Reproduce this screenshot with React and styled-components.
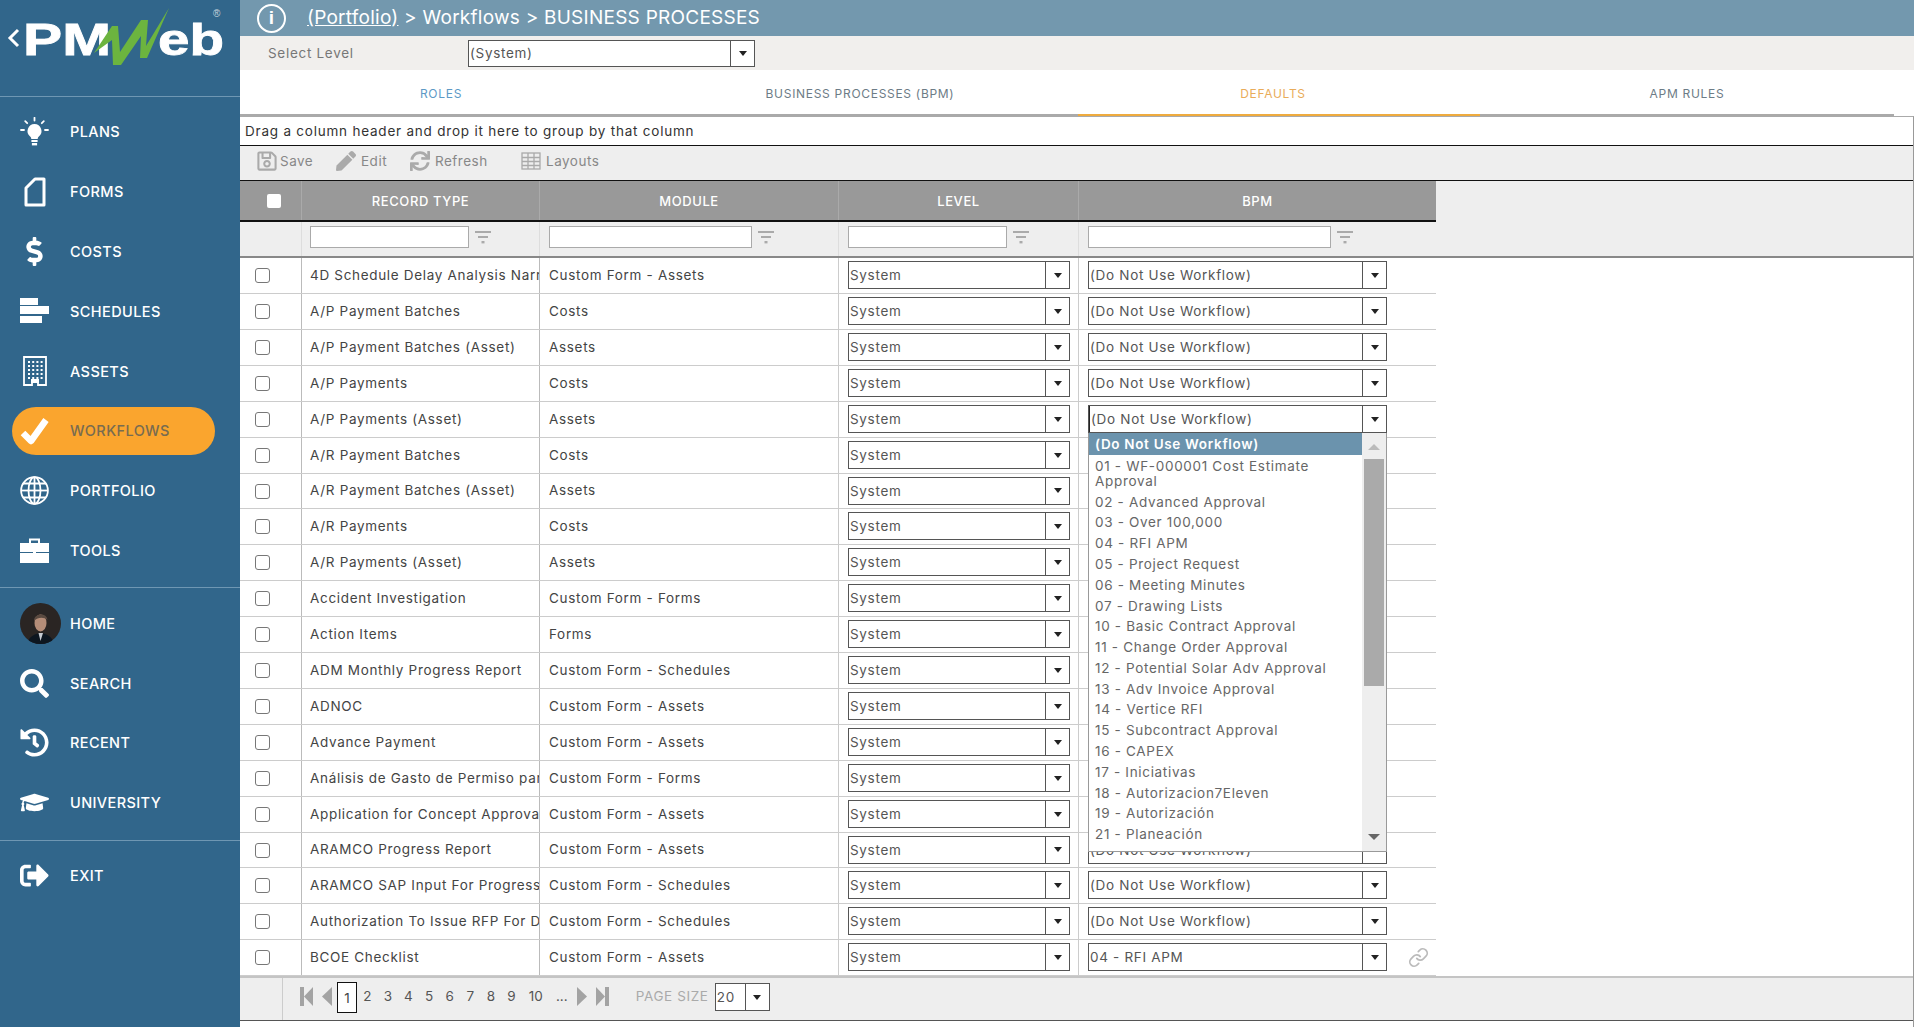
import React from "react";
import styled, { createGlobalStyle } from "styled-components";
import {
  FaDollarSign,
  FaSearch,
  FaHistory,
  FaGraduationCap,
  FaSignOutAlt,
  FaRegSave,
  FaPen,
  FaSync,
} from "react-icons/fa";
import { Link as LinkIcon } from "lucide-react";

const COLUMNS = "61px 238px 299px 240px 358px";

const GlobalStyle = createGlobalStyle`
  html, body {
    margin: 0;
    padding: 0;
    background: #fff;
    font-family: "Inter", "Liberation Sans", sans-serif;
  }
  * { box-sizing: border-box; }
`;

const rows = [
  { type: "4D Schedule Delay Analysis Narrative", module: "Custom Form - Assets" },
  { type: "A/P Payment Batches", module: "Costs" },
  { type: "A/P Payment Batches (Asset)", module: "Assets" },
  { type: "A/P Payments", module: "Costs" },
  { type: "A/P Payments (Asset)", module: "Assets", open: true },
  { type: "A/R Payment Batches", module: "Costs" },
  { type: "A/R Payment Batches (Asset)", module: "Assets", short: true },
  { type: "A/R Payments", module: "Costs" },
  { type: "A/R Payments (Asset)", module: "Assets" },
  { type: "Accident Investigation", module: "Custom Form - Forms" },
  { type: "Action Items", module: "Forms" },
  { type: "ADM Monthly Progress Report", module: "Custom Form - Schedules" },
  { type: "ADNOC", module: "Custom Form - Assets" },
  { type: "Advance Payment", module: "Custom Form - Assets" },
  { type: "Análisis de Gasto de Permiso para Obra", module: "Custom Form - Forms" },
  { type: "Application for Concept Approval", module: "Custom Form - Assets" },
  { type: "ARAMCO Progress Report", module: "Custom Form - Assets", short: true },
  { type: "ARAMCO SAP Input For Progress Report", module: "Custom Form - Schedules" },
  { type: "Authorization To Issue RFP For Design", module: "Custom Form - Schedules" },
  { type: "BCOE Checklist", module: "Custom Form - Assets", bpm: "04 - RFI APM", linked: true },
];

const workflowOptions = [
  "01 - WF-000001 Cost Estimate Approval",
  "02 - Advanced Approval",
  "03 - Over 100,000",
  "04 - RFI APM",
  "05 - Project Request",
  "06 - Meeting Minutes",
  "07 - Drawing Lists",
  "10 - Basic Contract Approval",
  "11 - Change Order Approval",
  "12 - Potential Solar Adv Approval",
  "13 - Adv Invoice Approval",
  "14 - Vertice RFI",
  "15 - Subcontract Approval",
  "16 - CAPEX",
  "17 - Iniciativas",
  "18 - Autorizacion7Eleven",
  "19 - Autorización",
  "21 - Planeación",
];

const PlansIcon = () => (
  <svg width="29" height="30" viewBox="0 0 29 30" fill="#fff">
    <path d="M14.5 7a7 7 0 0 0-4.4 12.4c.9.8 1.2 1.7 1.2 2.6h6.4c0-.9.3-1.8 1.2-2.6A7 7 0 0 0 14.5 7z" />
    <rect x="11.4" y="23" width="6.2" height="2" />
    <rect x="11.9" y="26" width="5.2" height="2.4" />
    <g stroke="#fff" strokeWidth="1.8" strokeLinecap="round">
      <line x1="14.5" y1="0.8" x2="14.5" y2="3.6" />
      <line x1="5.2" y1="4.2" x2="7.2" y2="6.2" />
      <line x1="23.8" y1="4.2" x2="21.8" y2="6.2" />
      <line x1="1" y1="13" x2="4" y2="13" />
      <line x1="25" y1="13" x2="28" y2="13" />
    </g>
  </svg>
);

const FormsIcon = () => (
  <svg width="29" height="30" viewBox="-4 0 29 30" fill="none" stroke="#fff" strokeWidth="3">
    <path d="M2 11 L11 2 H20 V28 H2 Z" strokeLinejoin="round" />
  </svg>
);

const SchedulesIcon = () => (
  <svg width="29" height="26" viewBox="0 0 29 26" fill="#fff">
    <rect x="0" y="0" width="18" height="7" />
    <rect x="0" y="8" width="29" height="8" />
    <rect x="0" y="18" width="22" height="7" />
  </svg>
);

const AssetsIcon = () => (
  <svg width="29" height="30" viewBox="-3 0 29 30">
    <path d="M1 1 H23 V29 H15 V25 H9 V29 H1 Z" fill="none" stroke="#fff" strokeWidth="1.8" />
    {[5, 9, 13, 17, 21].map((y) =>
      [5, 9.2, 13.4, 17.6].map((x) => <rect key={`${x}-${y}`} x={x} y={y} width="2" height="2" fill="#fff" />)
    )}
    <rect x="8" y="23" width="8" height="4" fill="#fff" />
  </svg>
);

const CheckIcon = () => (
  <svg width="29" height="28" viewBox="0 0 29 28">
    <path d="M3 16 L11 24 L26 3" fill="none" stroke="#fff" strokeWidth="6.5" strokeLinejoin="round" />
  </svg>
);

const GlobeIcon = () => (
  <svg width="29" height="29" viewBox="0 0 29 29" fill="none" stroke="#fff" strokeWidth="1.8">
    <circle cx="14.5" cy="14.5" r="13.4" />
    <ellipse cx="14.5" cy="14.5" rx="6" ry="13.4" />
    <line x1="14.5" y1="1" x2="14.5" y2="28" />
    <line x1="1" y1="14.5" x2="28" y2="14.5" />
    <path d="M3 7.5 H26 M3 21.5 H26" />
  </svg>
);

const ToolsIcon = () => (
  <svg width="29" height="26" viewBox="0 0 29 26" fill="#fff">
    <path d="M10 6 V2.5 H19 V6" fill="none" stroke="#fff" strokeWidth="2" />
    <rect x="0" y="6" width="29" height="9" />
    <rect x="0" y="16" width="29" height="10" />
    <rect x="13" y="14" width="3" height="3" />
  </svg>
);

const FilterIcon = () => (
  <svg width="16" height="13" viewBox="0 0 16 13" fill="#aaa">
    <rect x="0" y="0" width="16" height="2" />
    <rect x="3" y="5" width="10" height="2" />
    <rect x="6.5" y="10" width="3" height="2.4" />
  </svg>
);

const GridIcon = () => (
  <svg width="20" height="18" viewBox="0 0 20 18" fill="none" stroke="#aaa" strokeWidth="1.3">
    <rect x="1" y="1" width="18" height="16" />
    <path d="M1 5.5 H19 M1 9.5 H19 M1 13.5 H19 M7 1 V17 M13 1 V17" />
  </svg>
);

const Avatar = () => (
  <svg width="41" height="41" viewBox="0 0 41 41">
    <defs>
      <clipPath id="avatar-clip">
        <circle cx="20.5" cy="20.5" r="20.5" />
      </clipPath>
    </defs>
    <g clipPath="url(#avatar-clip)">
      <rect width="41" height="41" fill="#2a2523" />
      <path d="M7 41 C9 33 15 31 20 30 C27 31 32 33 34 41 Z" fill="#0d1620" />
      <path d="M18.5 30 L20.5 38 L23 30 Z" fill="#c8ccd2" />
      <ellipse cx="20.5" cy="20" rx="6" ry="8.5" fill="#b58d78" />
      <path d="M14 18 C13.5 10 27 9 27.5 17 C24 14 18 14 14 18 Z" fill="#5a4a40" />
    </g>
  </svg>
);

const Logo = () => (
  <LogoBox>
    <svg width="240" height="72" viewBox="0 0 240 72">
      <path d="M18 30 L10 38 L18 46" fill="none" stroke="#fff" strokeWidth="3" />
      <text x="23" y="55" fill="#fff" stroke="#fff" strokeWidth="0.8" fontFamily="Liberation Sans" fontWeight="700" fontSize="45" textLength="88" lengthAdjust="spacingAndGlyphs">
        PM
      </text>
      <text x="158" y="55" fill="#fff" stroke="#fff" strokeWidth="0.8" fontFamily="Liberation Sans" fontWeight="700" fontSize="45" textLength="66" lengthAdjust="spacingAndGlyphs">
        eb
      </text>
      <path
        d="M94 53 L112 26 L118 26 L120 52 L141 20 L148 20 L146 46 L169 8 L147 58 L140 58 L141 36 L121 65 L113 65 L112 40 Z"
        fill="#6cb43f"
      />
      <text x="213" y="17" fill="#c9d6df" fontFamily="Liberation Sans" fontSize="10">®</text>
    </svg>
  </LogoBox>
);

const SelectField = ({ value, width, height, focused, children }) => (
  <SelectBox $width={width} $height={height}>
    <SelectValue $focused={focused}>{value}</SelectValue>
    <SelectButton><Caret /></SelectButton>
    {children}
  </SelectBox>
);

const WorkflowDropdown = () => (
  <Dropdown>
    <OptionList>
      <ActiveOption>(Do Not Use Workflow)</ActiveOption>
      {workflowOptions.map((o) => (
        <Option key={o}>{o}</Option>
      ))}
    </OptionList>
    <ScrollTrack>
      <ArrowUp />
      <ScrollThumb />
      <ArrowDown />
    </ScrollTrack>
  </Dropdown>
);

const App = () => {
  return (
    <Page>
      <GlobalStyle />
      <Sidebar>
        <Logo />
        <NavGroup>
          <NavItem><NavIcon><PlansIcon /></NavIcon>PLANS</NavItem>
          <NavItem><NavIcon><FormsIcon /></NavIcon>FORMS</NavItem>
          <NavItem><NavIcon><FaDollarSign size={29} /></NavIcon>COSTS</NavItem>
          <NavItem><NavIcon><SchedulesIcon /></NavIcon>SCHEDULES</NavItem>
          <NavItem><NavIcon><AssetsIcon /></NavIcon>ASSETS</NavItem>
          <ActiveNav><NavIcon><CheckIcon /></NavIcon>WORKFLOWS</ActiveNav>
          <NavItem><NavIcon><GlobeIcon /></NavIcon>PORTFOLIO</NavItem>
          <NavItem><NavIcon><ToolsIcon /></NavIcon>TOOLS</NavItem>
        </NavGroup>
        <NavGroup>
          <NavItem><NavIcon><Avatar /></NavIcon>HOME</NavItem>
          <NavItem><NavIcon><FaSearch size={29} /></NavIcon>SEARCH</NavItem>
          <NavItem><NavIcon><FaHistory size={29} /></NavIcon>RECENT</NavItem>
          <NavItem><NavIcon><FaGraduationCap size={29} /></NavIcon>UNIVERSITY</NavItem>
        </NavGroup>
        <NavGroup>
          <NavItem><NavIcon><FaSignOutAlt size={29} /></NavIcon>EXIT</NavItem>
        </NavGroup>
      </Sidebar>

      <Main>
        <TopBar>
          <InfoIcon>i</InfoIcon>
          <Crumbs><CrumbLink>(Portfolio)</CrumbLink> &gt; Workflows &gt; BUSINESS PROCESSES</Crumbs>
        </TopBar>

        <LevelBar>
          <LevelLabel>Select Level</LevelLabel>
          <SelectField value="(System)" width={287} height={27} />
        </LevelBar>

        <Tabs>
          <Tab $color="#5d9ac6">ROLES</Tab>
          <Tab>BUSINESS PROCESSES (BPM)</Tab>
          <Tab $color="#e9ac5a" $active>DEFAULTS</Tab>
          <Tab>APM RULES</Tab>
        </Tabs>

        <GridBox>
          <GroupBar>Drag a column header and drop it here to group by that column</GroupBar>
          <Toolbar>
            <ToolButton $width={80} $gap={2}><FaRegSave size={22} />Save</ToolButton>
            <ToolButton $width={74}><FaPen size={20} />Edit</ToolButton>
            <ToolButton $width={111}><FaSync size={20} />Refresh</ToolButton>
            <ToolButton><GridIcon />Layouts</ToolButton>
          </Toolbar>

          <HeaderBand>
            <HeaderRow>
              <HeaderCell $first><HeaderCheck /></HeaderCell>
              <HeaderCell>RECORD TYPE</HeaderCell>
              <HeaderCell>MODULE</HeaderCell>
              <HeaderCell>LEVEL</HeaderCell>
              <HeaderCell>BPM</HeaderCell>
            </HeaderRow>
          </HeaderBand>

          <FilterBand>
            <FilterRow>
              <FilterCell />
              <FilterCell $indent={8}><FilterInput $width={159} /><FilterIcon /></FilterCell>
              <FilterCell><FilterInput $width={203} /><FilterIcon /></FilterCell>
              <FilterCell><FilterInput $width={159} /><FilterIcon /></FilterCell>
              <FilterCell><FilterInput $width={243} /><FilterIcon /></FilterCell>
            </FilterRow>
          </FilterBand>

          <Body>
            {rows.map((row) => (
              <Row key={row.type} $short={row.short}>
                <CheckCell><RowCheck /></CheckCell>
                <TextCell $indent={8}>{row.type}</TextCell>
                <TextCell>{row.module}</TextCell>
                <ControlCell><SelectField value="System" width={222} height={28} /></ControlCell>
                <ControlCell>
                  <SelectField value={row.bpm || "(Do Not Use Workflow)"} width={299} height={28} focused={row.open}>
                    {row.open && <WorkflowDropdown />}
                  </SelectField>
                  {row.linked && <LinkMark><LinkIcon size={21} /></LinkMark>}
                </ControlCell>
              </Row>
            ))}
          </Body>

          <Pager>
            <PagerGutter />
            <PagerNav>
              <PagerIcon $gap={9}>
                <svg width="13" height="19" viewBox="0 0 13 19" fill="#a3a3a3"><rect width="4" height="19" /><path d="M13 0 V19 L4 9.5 Z" /></svg>
              </PagerIcon>
              <PagerIcon $gap={5}>
                <svg width="10" height="19" viewBox="0 0 10 19" fill="#a3a3a3"><path d="M10 0 V19 L0 9.5 Z" /></svg>
              </PagerIcon>
              <CurrentPage>1</CurrentPage>
              {[2, 3, 4, 5, 6, 7, 8, 9].map((n) => (
                <PageNumber key={n}>{n}</PageNumber>
              ))}
              <PageNumber $wide={28}>10</PageNumber>
              <PageNumber $wide={24}>...</PageNumber>
              <PagerIcon $gap={9} $lead={3}>
                <svg width="10" height="19" viewBox="0 0 10 19" fill="#a3a3a3"><path d="M0 0 V19 L10 9.5 Z" /></svg>
              </PagerIcon>
              <PagerIcon $gap={27}>
                <svg width="13" height="19" viewBox="0 0 13 19" fill="#a3a3a3"><rect x="9" width="4" height="19" /><path d="M0 0 V19 L9 9.5 Z" /></svg>
              </PagerIcon>
              <PageSizeLabel>PAGE SIZE</PageSizeLabel>
              <SelectField value="20" width={55} height={28} />
            </PagerNav>
          </Pager>
        </GridBox>
      </Main>
    </Page>
  );
};

const Page = styled.div`
  display: flex;
  width: 1914px;
  height: 1027px;
  overflow: hidden;
`;

const Sidebar = styled.nav`
  width: 240px;
  flex: none;
  background: #31668b;
  color: #fff;
`;

const LogoBox = styled.div`
  height: 97px;
  border-bottom: 1px solid #6f97b3;
`;

const NavGroup = styled.div`
  padding: 5px 0 7px;
  border-bottom: 1px solid #6f97b3;

  &:last-child {
    border-bottom: none;
  }
`;

const NavItem = styled.div`
  display: flex;
  align-items: center;
  height: 59.8px;
  padding-left: 20px;
  font-size: 14.5px;
  font-weight: 500;
  letter-spacing: 0.4px;
`;

const ActiveNav = styled(NavItem)`
  position: relative;
  z-index: 0;
  color: #786c50;

  &::before {
    content: "";
    position: absolute;
    z-index: -1;
    left: 12px;
    top: 6px;
    width: 203px;
    height: 48px;
    border-radius: 24px;
    background: #faa52e;
  }
`;

const NavIcon = styled.span`
  display: flex;
  align-items: center;
  width: 50px;
`;

const Main = styled.main`
  flex: 1;
  display: flex;
  flex-direction: column;
  min-width: 0;
`;

const TopBar = styled.header`
  display: flex;
  align-items: center;
  height: 36px;
  padding-left: 17px;
  background: #7398ae;
  color: #fff;
`;

const InfoIcon = styled.span`
  display: flex;
  align-items: center;
  justify-content: center;
  width: 29px;
  height: 29px;
  margin-right: 21px;
  border: 2.5px solid #fff;
  border-radius: 50%;
  font-size: 19px;
  font-weight: 700;
  font-family: "Liberation Sans", sans-serif;
`;

const Crumbs = styled.div`
  padding-bottom: 2px;
  font-size: 19px;
  letter-spacing: 0.25px;
`;

const CrumbLink = styled.span`
  text-decoration: underline;
`;

const LevelBar = styled.div`
  display: flex;
  align-items: center;
  height: 34px;
  padding-left: 28px;
  background: #f1efed;
`;

const LevelLabel = styled.span`
  width: 200px;
  font-size: 13.5px;
  letter-spacing: 0.7px;
  color: #777;
`;

const Tabs = styled.div`
  display: grid;
  grid-template-columns: 402px 436px 402px 414px;
  width: 1654px;
  height: 46px;
  border-bottom: 2px solid #aaa;
`;

const Tab = styled.div`
  display: flex;
  align-items: center;
  justify-content: center;
  height: 46px;
  padding-top: 1px;
  padding-right: ${(p) => (p.$active ? "12px" : "0")};
  font-size: 12px;
  letter-spacing: 0.7px;
  color: ${(p) => p.$color || "#6d7c86"};
  box-shadow: ${(p) => (p.$active ? "inset 0 -2px 0 #efab3e" : "none")};
`;

const GridBox = styled.section`
  flex: 1;
  display: flex;
  flex-direction: column;
  border-top: 1px solid #aaa;
  border-right: 1px solid #999;
`;

const GroupBar = styled.div`
  display: flex;
  align-items: center;
  height: 29px;
  padding-left: 5px;
  font-size: 13.5px;
  letter-spacing: 0.78px;
  color: #333;
  border-bottom: 1px solid #111;
`;

const Toolbar = styled.div`
  display: flex;
  align-items: center;
  height: 35px;
  padding: 0 0 4px 16px;
  background: #eee;
  border-bottom: 1px solid #111;
`;

const ToolButton = styled.span`
  display: flex;
  align-items: center;
  gap: ${(p) => p.$gap ?? 5}px;
  width: ${(p) => (p.$width ? `${p.$width}px` : "auto")};
  font-size: 13.5px;
  letter-spacing: 0.5px;
  color: #888;

  svg {
    color: #aaa;
  }
`;

const HeaderBand = styled.div`
  height: 41px;
  background: #eee;
`;

const HeaderRow = styled.div`
  display: grid;
  grid-template-columns: ${COLUMNS};
  width: 1196px;
  height: 41px;
  background: #999;
  border-bottom: 2px solid #111;
`;

const HeaderCell = styled.div`
  display: flex;
  align-items: center;
  justify-content: center;
  padding-left: ${(p) => (p.$first ? "6px" : "0")};
  font-size: 13px;
  font-weight: 500;
  letter-spacing: 0.6px;
  color: #fff;
  border-left: ${(p) => (p.$first ? "none" : "1px solid #aaa")};
`;

const HeaderCheck = styled.span`
  width: 14px;
  height: 14px;
  border-radius: 2px;
  background: #fff;
`;

const FilterBand = styled.div`
  height: 36px;
  background: #eee;
  border-bottom: 2px solid #888;
`;

const FilterRow = styled.div`
  display: grid;
  grid-template-columns: ${COLUMNS};
  width: 1196px;
  height: 34px;
`;

const FilterCell = styled.div`
  display: flex;
  align-items: flex-start;
  gap: 6px;
  padding: 4px 0 0 ${(p) => p.$indent ?? 9}px;

  & + & {
    border-left: 1px solid #ddd;
  }

  svg {
    margin-top: 5px;
  }
`;

const FilterInput = styled.span`
  width: ${(p) => p.$width}px;
  height: 22px;
  background: #fff;
  border: 1px solid #aaa;
`;

const Body = styled.div`
  flex: none;
`;

const Row = styled.div`
  display: grid;
  grid-template-columns: ${COLUMNS};
  width: 1196px;
  height: ${(p) => (p.$short ? "35px" : "36px")};
  border-bottom: 1px solid #ccc;
`;

const CheckCell = styled.div`
  display: flex;
  align-items: center;
  padding-left: 15px;
`;

const RowCheck = styled.span`
  width: 15px;
  height: 15px;
  border: 1px solid #777;
  border-radius: 3px;
  background: #fff;
`;

const TextCell = styled.div`
  display: flex;
  align-items: center;
  padding: 0 0 2px ${(p) => p.$indent ?? 9}px;
  overflow: hidden;
  white-space: nowrap;
  font-size: 13.5px;
  letter-spacing: 0.68px;
  color: #444;
  border-left: 1px solid #bbb;
`;

const ControlCell = styled.div`
  display: flex;
  align-items: center;
  padding: 0 0 1px 9px;
  border-left: 1px solid #ccc;
`;

const SelectBox = styled.div`
  position: relative;
  display: flex;
  flex: none;
  width: ${(p) => p.$width}px;
  height: ${(p) => p.$height}px;
  background: #fff;
  border: 1px solid #555;
`;

const SelectValue = styled.span`
  flex: 1;
  display: flex;
  align-items: center;
  padding-left: 1px;
  font-size: 13.5px;
  letter-spacing: 0.68px;
  color: #555;
  border-left: ${(p) => (p.$focused ? "1px solid #222" : "none")};
`;

const SelectButton = styled.span`
  display: flex;
  align-items: center;
  justify-content: center;
  width: 24px;
  border-left: 1px solid #555;
`;

const Caret = styled.span`
  width: 0;
  height: 0;
  border-left: 4px solid transparent;
  border-right: 4px solid transparent;
  border-top: 5px solid #222;
`;

const Dropdown = styled.div`
  position: absolute;
  z-index: 5;
  top: 27px;
  left: -1px;
  display: flex;
  width: 299px;
  height: 419px;
  background: #fff;
  border: 1px solid #999;
  border-top: none;
`;

const OptionList = styled.div`
  flex: 1;
  overflow: hidden;
  min-width: 0;
`;

const Option = styled.div`
  padding: 2.9px 24px 2.9px 6px;
  line-height: 15px;
  font-size: 13.5px;
  letter-spacing: 0.68px;
  color: #666;
`;

const ActiveOption = styled(Option)`
  height: 22px;
  margin-bottom: 1px;
  padding-top: 4px;
  font-weight: 600;
  color: #fff;
  background: #6b93ad;
`;

const ScrollTrack = styled.div`
  position: relative;
  width: 24px;
  background: #eee;
`;

const ScrollThumb = styled.div`
  position: absolute;
  top: 26px;
  left: 2px;
  width: 20px;
  height: 227px;
  background: #aaa;
`;

const ArrowUp = styled.span`
  position: absolute;
  top: 11px;
  left: 6px;
  border-left: 6px solid transparent;
  border-right: 6px solid transparent;
  border-bottom: 6px solid #bbb;
`;

const ArrowDown = styled.span`
  position: absolute;
  bottom: 11px;
  left: 6px;
  border-left: 6px solid transparent;
  border-right: 6px solid transparent;
  border-top: 6px solid #666;
`;

const LinkMark = styled.span`
  display: flex;
  margin-left: 21px;
  color: #bbb;
`;

const Pager = styled.div`
  display: flex;
  height: 45px;
  background: #eee;
  border-top: 2px solid #c4c4c4;
  border-bottom: 1px solid #555;
`;

const PagerGutter = styled.div`
  width: 43px;
  border-right: 1px solid #ccc;
`;

const PagerNav = styled.div`
  display: flex;
  align-items: center;
  padding: 0 0 4px 17px;
`;

const PagerIcon = styled.span`
  display: flex;
  margin-left: ${(p) => p.$lead || 0}px;
  margin-right: ${(p) => p.$gap}px;
  margin-bottom: 2px;
`;

const CurrentPage = styled.span`
  display: flex;
  align-items: center;
  justify-content: center;
  width: 20px;
  height: 31px;
  padding-top: 2px;
  font-size: 13.5px;
  color: #444;
  background: #fff;
  border: 1px solid #111;
`;

const PageNumber = styled.span`
  width: ${(p) => p.$wide || 20.6}px;
  padding-bottom: 2px;
  text-align: center;
  font-size: 13.5px;
  color: #555;
`;

const PageSizeLabel = styled.span`
  width: 79px;
  padding-bottom: 2px;
  font-size: 13.5px;
  letter-spacing: 0.6px;
  color: #aaa;
`;

export default App;
